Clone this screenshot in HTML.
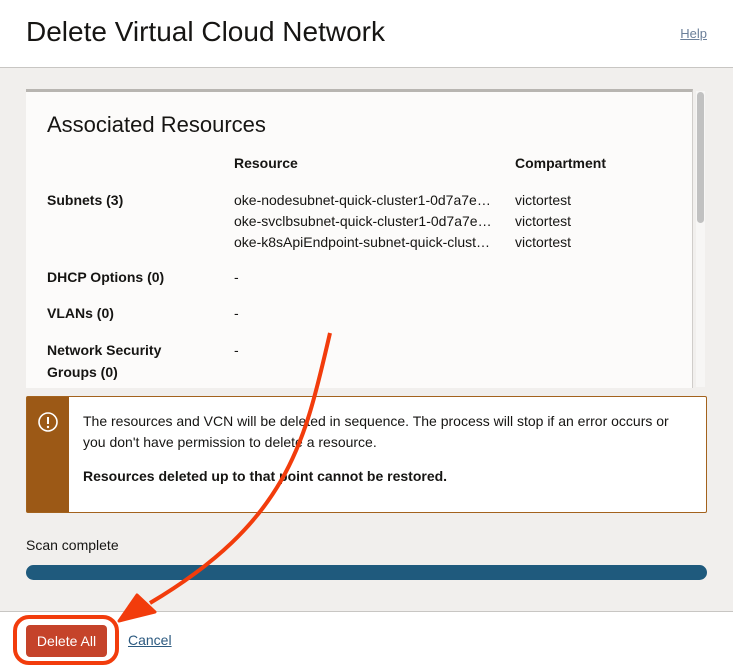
<!DOCTYPE html>
<html><head><style>
*{box-sizing:border-box;margin:0;padding:0}
body{width:733px;height:668px;overflow:hidden;font-family:"Liberation Sans",Arial,sans-serif;background:#f1efed;position:relative;color:#161513}
.hdr{position:absolute;left:0;top:0;width:733px;height:68px;background:#fff;border-bottom:1px solid #c8c6c3}
.hdr h1{position:absolute;left:26px;top:16px;font-size:28px;font-weight:400}
.help{position:absolute;right:26px;top:26px;font-size:13px;color:#6b7f99;text-decoration:underline}
.panel{position:absolute;left:26px;top:89px;width:667px;height:299px;background:#fcfbfa;border-top:3px solid #b8b5b1;border-right:1px solid #d0cdca;overflow:hidden}
.panel h2{position:absolute;left:21px;top:20px;font-size:22px;font-weight:400}
.t{position:absolute;font-size:14px;white-space:nowrap}
.b{font-weight:700}
.sb{position:absolute;left:696px;top:91px;width:9px;height:296px;background:#f7f6f5}
.sb div{width:7px;height:131px;background:#c1c1c1;border-radius:4px;margin:1px}
.warn{position:absolute;left:26px;top:396px;width:681px;height:117px;background:#fff;border:1px solid #a3621d;border-radius:2px}
.warn .strip{position:absolute;left:0;top:0;width:42px;height:115px;background:#9c5916}
.warn p{position:absolute;left:56px;font-size:14px;line-height:21px;white-space:nowrap}
.bar{position:absolute;left:26px;top:565px;width:681px;height:15px;background:#1f5a7d;border-radius:8px}
.ftr{position:absolute;left:0;top:611px;width:733px;height:57px;background:#fff;border-top:1px solid #c8c6c3}
.btn{position:absolute;left:26px;top:625px;width:81px;height:32px;background:#c5432a;color:#fff;font-size:14px;border-radius:4px;text-align:center;line-height:32px}
.cancel{position:absolute;left:128px;top:632px;font-size:14px;color:#2c5a80;text-decoration:underline}
</style></head><body>
<div class="hdr"><h1>Delete Virtual Cloud Network</h1><span class="help">Help</span></div>
<div class="panel">
<h2>Associated Resources</h2>
<div class="t b" style="left:208px;top:63px">Resource</div>
<div class="t b" style="left:489px;top:63px">Compartment</div>
<div class="t b" style="left:21px;top:100px">Subnets (3)</div>
<div class="t" style="left:208px;top:100px">oke-nodesubnet-quick-cluster1-0d7a7e…</div>
<div class="t" style="left:208px;top:121px">oke-svclbsubnet-quick-cluster1-0d7a7e…</div>
<div class="t" style="left:208px;top:142px">oke-k8sApiEndpoint-subnet-quick-clust…</div>
<div class="t" style="left:489px;top:100px">victortest</div>
<div class="t" style="left:489px;top:121px">victortest</div>
<div class="t" style="left:489px;top:142px">victortest</div>
<div class="t b" style="left:21px;top:177px">DHCP Options (0)</div>
<div class="t" style="left:208px;top:177px">-</div>
<div class="t b" style="left:21px;top:213px">VLANs (0)</div>
<div class="t" style="left:208px;top:213px">-</div>
<div class="t b" style="left:21px;top:247px;line-height:22px">Network Security<br>Groups (0)</div>
<div class="t" style="left:208px;top:250px">-</div>
</div>
<div class="sb"><div></div></div>
<div class="warn"><div class="strip">
<svg width="42" height="40" viewBox="0 0 42 40"><circle cx="21" cy="25" r="9" fill="none" stroke="#fff" stroke-width="1.6"/><line x1="21" y1="20" x2="21" y2="27" stroke="#fff" stroke-width="2"/><circle cx="21" cy="30" r="1.2" fill="#fff"/></svg></div>
<p style="top:14px">The resources and VCN will be deleted in sequence. The process will stop if an error occurs or<br>you don't have permission to delete a resource.</p>
<p style="top:69px;font-weight:700">Resources deleted up to that point cannot be restored.</p>
</div>
<div class="t" style="left:26px;top:537px;font-size:14px">Scan complete</div>
<div class="bar"></div>
<div class="ftr"></div>
<div class="btn">Delete All</div>
<span class="cancel">Cancel</span>
<svg style="position:absolute;left:0;top:0" width="733" height="668">
<path d="M330 333 C 305 440, 290 520, 150 603" fill="none" stroke="#f23c0c" stroke-width="4"/>
<path d="M119 621 L137 595 L155 612 Z" fill="#f23c0c" stroke="#f23c0c" stroke-width="3" stroke-linejoin="round"/>
<rect x="15" y="617" width="102" height="46" rx="14" fill="none" stroke="#f23c0c" stroke-width="4"/>
</svg>
</body></html>
